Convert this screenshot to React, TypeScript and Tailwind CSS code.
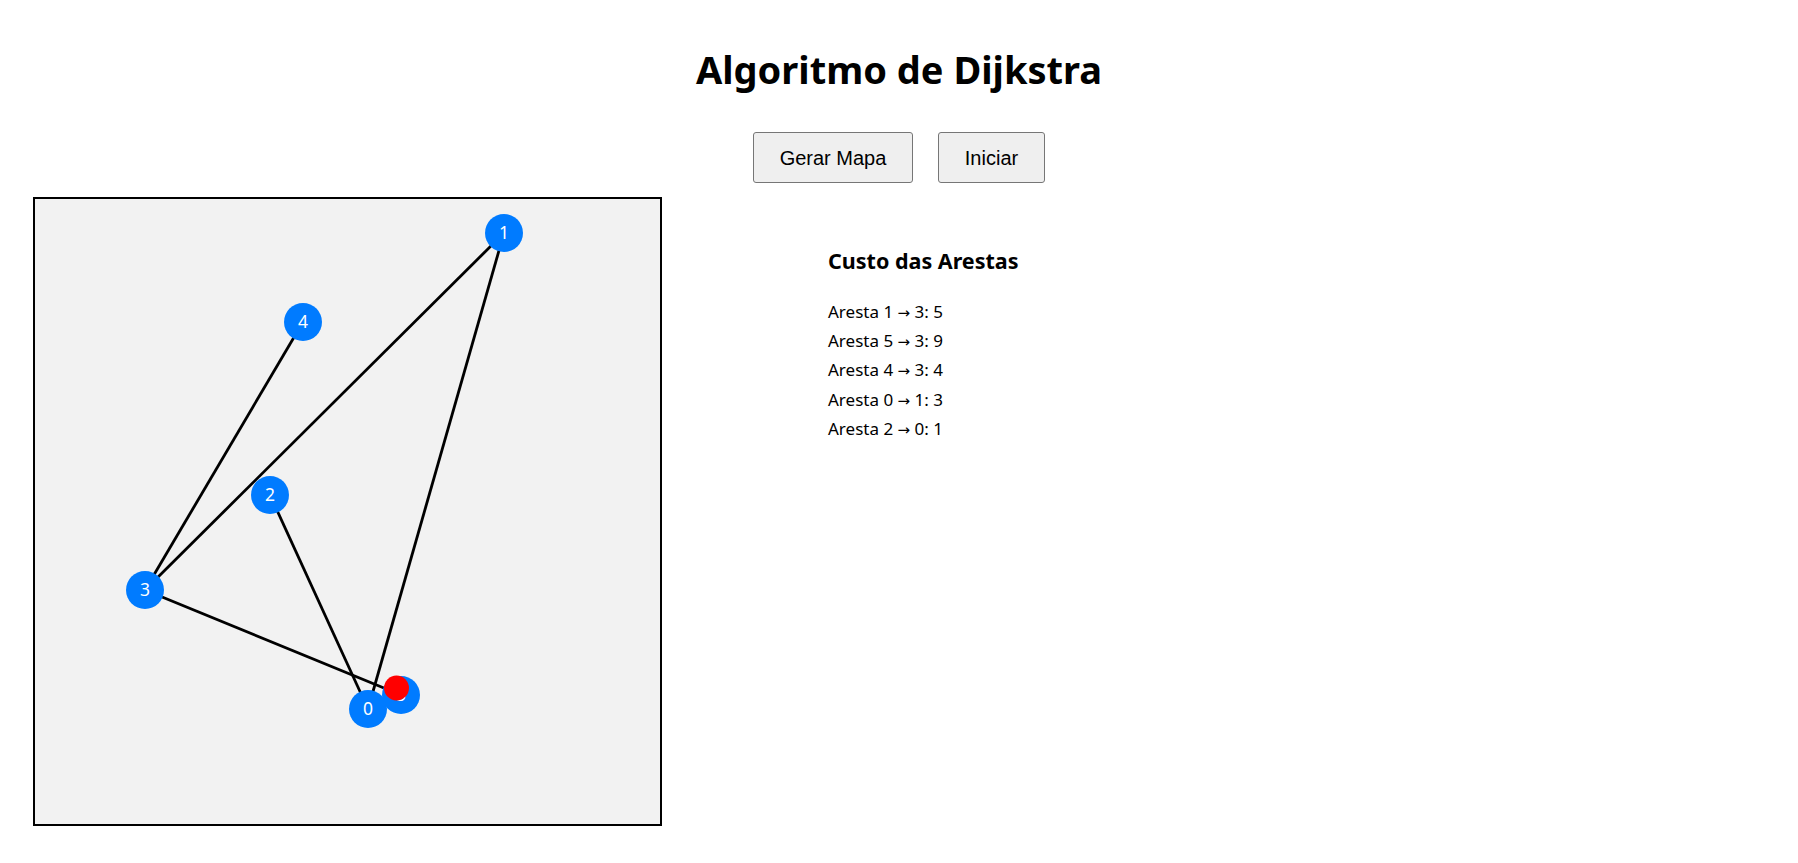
import React from "react";

type Node = { id: number; x: number; y: number };

const nodes: Node[] = [
  { id: 5, x: 366, y: 496 },
  { id: 0, x: 333, y: 510 },
  { id: 1, x: 469, y: 34 },
  { id: 2, x: 235, y: 296 },
  { id: 3, x: 110, y: 391 },
  { id: 4, x: 268, y: 123 },
];

const edges: { from: number; to: number; cost: number }[] = [
  { from: 1, to: 3, cost: 5 },
  { from: 5, to: 3, cost: 9 },
  { from: 4, to: 3, cost: 4 },
  { from: 0, to: 1, cost: 3 },
  { from: 2, to: 0, cost: 1 },
];

const byId = (id: number) => nodes.find((n) => n.id === id)!;

// the moving marker, on its way along 3 -> 5
const car = { x: 361.5, y: 489 };

function GraphCanvas() {
  return (
    <div className="h-[629px] w-[629px] shrink-0 border-2 border-black bg-[#f2f2f2]">
      <svg width={625} height={625} viewBox="0 0 625 625">
        {edges.map((e) => {
          const a = byId(e.from);
          const b = byId(e.to);
          return (
            <line
              key={`${e.from}-${e.to}`}
              x1={a.x}
              y1={a.y}
              x2={b.x}
              y2={b.y}
              stroke="#000"
              strokeWidth={2.8}
            />
          );
        })}
        {nodes.map((n) => (
          <g key={n.id}>
            <circle cx={n.x} cy={n.y} r={19} fill="#007bff" />
            <text
              x={n.x}
              y={n.y + 6}
              textAnchor="middle"
              fill="#fff"
              fontSize={17.5}
              fontFamily="'Noto Sans', sans-serif"
            >
              {n.id}
            </text>
          </g>
        ))}
        <circle cx={car.x} cy={car.y} r={12.5} fill="#ff0000" />
      </svg>
    </div>
  );
}

export default function App() {
  return (
    <div className="min-h-screen bg-white pt-[50px] font-['Noto_Sans',sans-serif] text-black">
      <h1 className="text-center text-[38px] font-bold leading-[38px]">Algoritmo de Dijkstra</h1>

      <div className="mt-[44px] flex justify-center gap-[25px] font-['Liberation_Sans',Arial,sans-serif]">
        <button className="h-[51px] w-[160px] rounded-[3px] border border-[#767676] bg-[#efefef] text-[20px]">
          Gerar Mapa
        </button>
        <button className="h-[51px] w-[107px] rounded-[3px] border border-[#767676] bg-[#efefef] text-[20px]">
          Iniciar
        </button>
      </div>

      <div className="mt-[14px] flex pl-[33px]">
        <GraphCanvas />
        <div className="ml-[166px] pt-[51px]">
          <h3 className="text-[21.5px] font-bold leading-[26px]">Custo das Arestas</h3>
          <ul className="mt-[23px]">
            {edges.map((e) => (
              <li key={`${e.from}-${e.to}`} className="h-[29.2px] text-[17px] leading-[29.2px]">
                Aresta {e.from}{" "}
                <span className="font-['DejaVu_Sans',sans-serif] text-[15px] leading-none">→</span> {e.to}:{" "}
                {e.cost}
              </li>
            ))}
          </ul>
        </div>
      </div>
    </div>
  );
}
